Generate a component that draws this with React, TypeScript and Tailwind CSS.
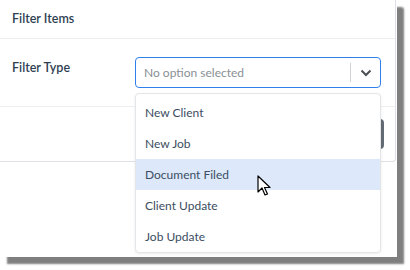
import React from "react";

const options = ["New Client", "New Job", "Document Filed", "Client Update", "Job Update"];

function Cursor() {
  return (
    <svg width="14" height="22" viewBox="0 0 14 22" className="absolute left-[257px] top-[175px]">
      <path
        d="M1 1 L1 17 L5 13 L8 20 L10.5 19 L7.5 12.5 L13 12.5 Z"
        fill="#fff"
        stroke="#000"
        strokeWidth="1.2"
        strokeLinejoin="round"
      />
    </svg>
  );
}

export default function App() {
  return (
    <div className="w-[410px] h-[270px] bg-white font-['Lato','Noto_Sans',sans-serif] text-[12px]">
      <div className="relative w-[397px] h-[257px] bg-white rounded-tr-[3px] shadow-[7px_7px_2px_rgba(0,0,0,0.5)]">
        {/* modal */}
        <div className="w-[396px] border-r border-b border-[#dde1e5] rounded-br-[4px]">
          <div className="h-[39px] border-b border-[#eceef0] pl-3 flex items-center font-semibold text-[12.5px] text-[#2f3f52]">
            Filter Items
          </div>
          <div className="h-[67px] flex pt-[18px]">
            <div className="w-[135px] pl-3 pt-[2px] font-semibold text-[12.5px] text-[#2f3f52]">Filter Type</div>
            <div className="w-[246px] h-[31px] border border-[#2f80ed] rounded-[4px] flex items-center">
              <span className="flex-1 pl-2 text-[#8a8f95]">No option selected</span>
              <span className="w-px h-[19px] bg-[#cfd3d7]" />
              <span className="w-[29px] flex justify-center">
                <svg width="12" height="8" viewBox="0 0 12 8">
                  <path d="M1.5 1.5 L6 6 L10.5 1.5" fill="none" stroke="#4a4f55" strokeWidth="2" />
                </svg>
              </span>
            </div>
          </div>
          <div className="h-[55px] border-t border-[#eceef0] flex items-center justify-end pr-[11px]">
            <div className="w-[64px] h-[30px] rounded-[4px] bg-[#636c75]" />
          </div>
        </div>

        {/* dropdown menu */}
        <div className="absolute left-[135px] top-[93px] w-[246px] bg-white border border-[#e3e6e9] rounded-[4px] shadow-[0_1px_3px_rgba(0,0,0,0.08)] pt-[3px] text-[#3b4d62]">
          {options.map((o) => (
            <div
              key={o}
              className={
                "h-[31px] flex items-center pl-[9px] " + (o === "Document Filed" ? "bg-[#dde9fb]" : "")
              }
            >
              {o}
            </div>
          ))}
        </div>

        <Cursor />
      </div>
    </div>
  );
}
